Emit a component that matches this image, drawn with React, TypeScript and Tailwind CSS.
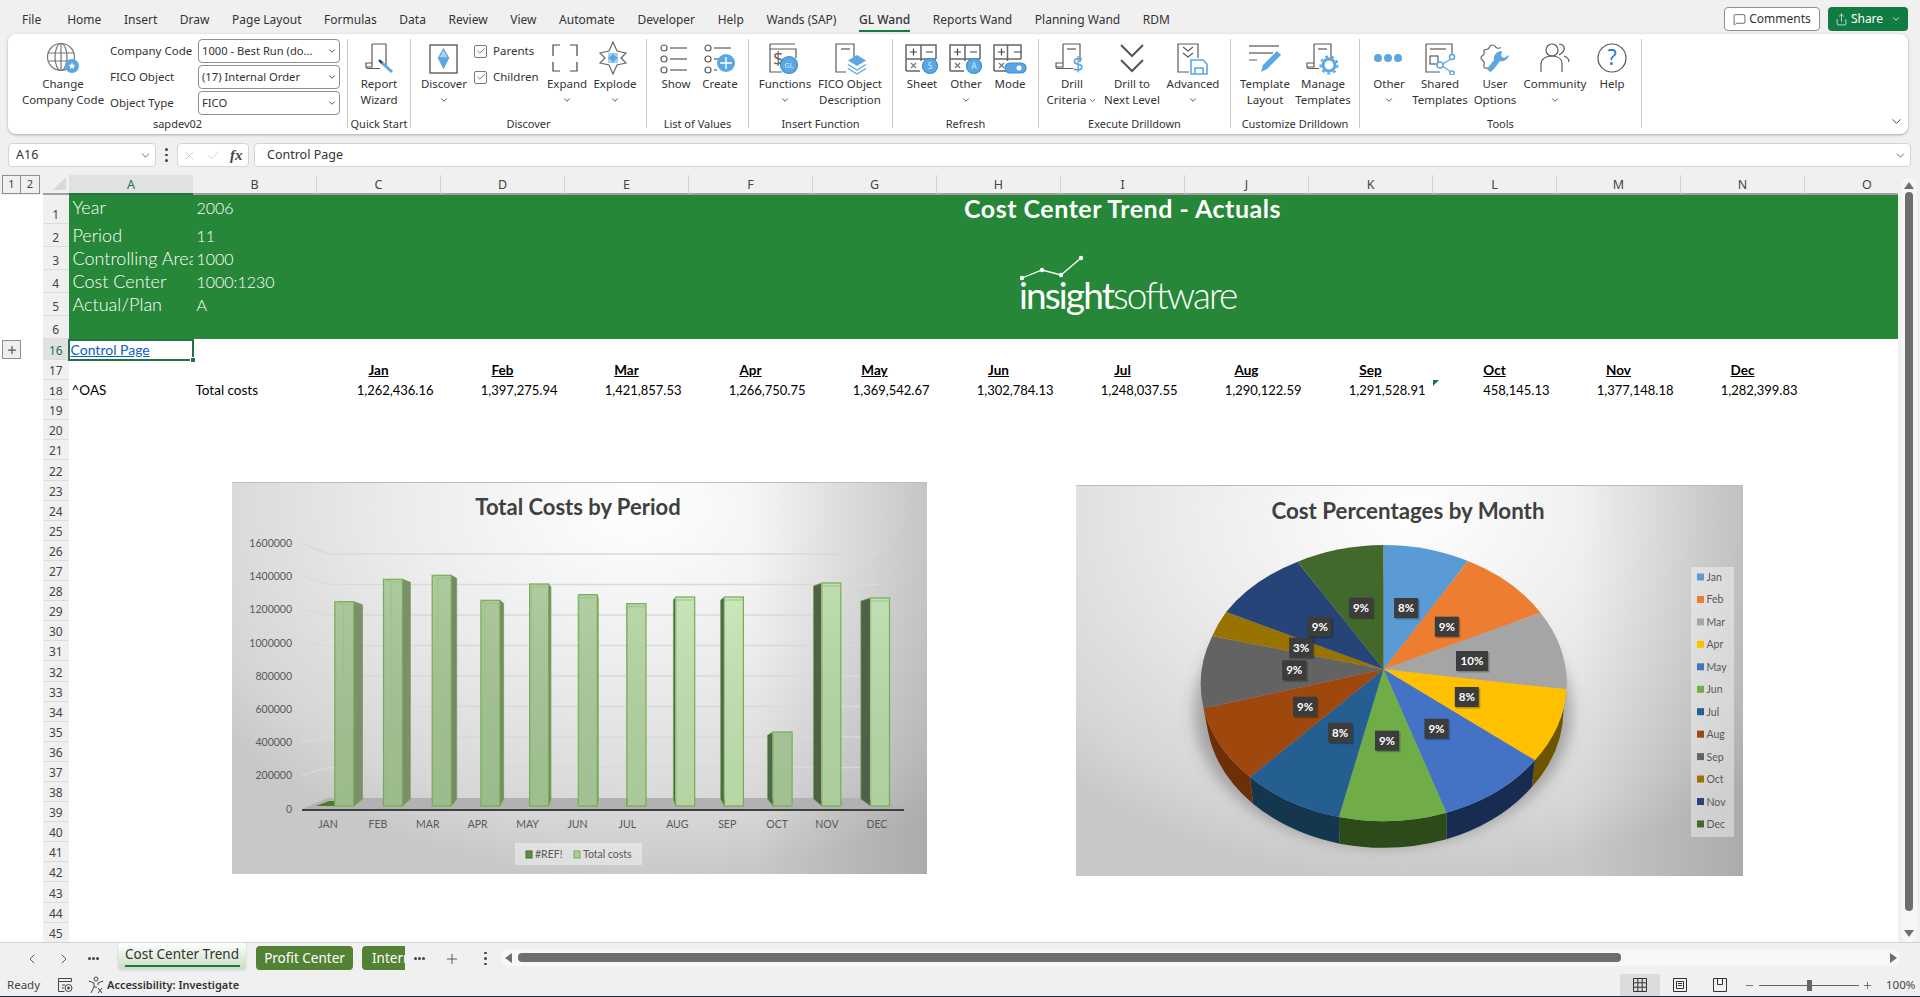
import { ChevronDown, ChevronLeft, ChevronRight, MessageSquare, X, Check, Plus, Minus, Share } from "lucide-react";
import type { ReactNode } from "react";

const BLUE = "#5ba7e4";
const INK = "#5a5a5a";

const tabs = ["Home", "Insert", "Draw", "Page Layout", "Formulas", "Data", "Review", "View", "Automate", "Developer", "Help", "Wands (SAP)", "GL Wand", "Reports Wand", "Planning Wand", "RDM"];
const cols = ["A", "B", "C", "D", "E", "F", "G", "H", "I", "J", "K", "L", "M", "N", "O"];
const months = ["Jan", "Feb", "Mar", "Apr", "May", "Jun", "Jul", "Aug", "Sep", "Oct", "Nov", "Dec"];
const values = ["1,262,436.16", "1,397,275.94", "1,421,857.53", "1,266,750.75", "1,369,542.67", "1,302,784.13", "1,248,037.55", "1,290,122.59", "1,291,528.91", "458,145.13", "1,377,148.18", "1,282,399.83"];

// ---- ribbon icons

function Ico({ children, w = 34 }: { children: ReactNode; w?: number }) {
  return (
    <svg width={w} height="34" viewBox={`0 0 ${w} 34`} fill="none" stroke={INK} strokeWidth="1.2">
      {children}
    </svg>
  );
}

const GlobeIcon = () => (
  <Ico>
    <circle cx="15" cy="16" r="13.5" stroke="#777" />
    <ellipse cx="15" cy="16" rx="6" ry="13.5" stroke="#777" />
    <path d="M2 12h26M2 20h26M15 3v26" stroke="#777" />
    <circle cx="26" cy="25" r="7" fill={BLUE} stroke="none" />
    <path d="M26 21.5l1 2.3 2.4.2-1.8 1.6.5 2.4-2.1-1.3-2.1 1.3.5-2.4-1.8-1.6 2.4-.2z" fill="#fff" stroke="none" />
  </Ico>
);
const WizardIcon = () => (
  <Ico>
    <path d="M10 3h14v21M10 3v23H4v-4h6M4 26c0 1 1 1.500 2 1.500h12" />
    <path d="M18 20l12 11" stroke={BLUE} strokeWidth="3" />
    <path d="M17 19l3 3" stroke="#333" strokeWidth="2" />
  </Ico>
);
const DiscoverIcon = () => (
  <Ico>
    <rect x="3" y="4" width="27" height="28" stroke="#444" />
    <path d="M16.500 8l5 9h-10z" fill="#a8d3f2" stroke={BLUE} />
    <path d="M16.500 27l5-10h-10z" fill={BLUE} stroke={BLUE} />
  </Ico>
);
const ExpandIcon = () => (
  <Ico>
    <path d="M10 4H3v11M20 4h7v11M3 21v9h7M27 21v9h-7" stroke="#444" />
  </Ico>
);
const ExplodeIcon = () => (
  <Ico>
    <path d="M15 1l4 9 9 2-5 5 5 5-9 2-4 9-4-9-9-2 5-5-5-5 9-2z" stroke="#666" />
    <rect x="10" y="12" width="10" height="10" fill="#a6d1f0" stroke="none" />
    <path d="M15 12l2 3 3 2-3 2-2 3-2-3-3-2 3-2z" fill={BLUE} stroke="none" />
  </Ico>
);
const ListRows = ({ short }: { short?: boolean }) => (
  <>
    <circle cx="5" cy="7" r="3" />
    <path d="M11 7h17" />
    <circle cx="5" cy="18" r="3" />
    <path d={short ? "M11 18h7" : "M11 18h17"} stroke="#999" strokeWidth="2" />
    <circle cx="5" cy="29" r="3" />
    <path d={short ? "M11 29h3" : "M11 29h17"} />
  </>
);
const ShowIcon = () => (
  <Ico>
    <ListRows />
  </Ico>
);
const CreateIcon = () => (
  <Ico>
    <ListRows short />
    <circle cx="23" cy="22" r="9" fill={BLUE} stroke="none" />
    <path d="M23 16v12M17 22h12" stroke="#fff" strokeWidth="1.400" />
  </Ico>
);
const FunctionsIcon = () => (
  <Ico w={36}>
    <path d="M3 3h25M3 8h26v9M3 3v28h12" />
    <text x="6" y="24" fontSize="18" fill="#666" stroke="none" fontFamily="Noto Sans">$</text>
    <circle cx="22" cy="24" r="8.500" fill={BLUE} stroke="#3d8fd0" />
    <text x="22" y="26.500" fontSize="7" fill="#d8ecfb" stroke="none" textAnchor="middle" fontFamily="Noto Sans">GL</text>
  </Ico>
);
const FicoIcon = () => (
  <Ico w={36}>
    <path d="M22 16V3H4v28h10" />
    <path d="M9 8h9" stroke="#999" strokeWidth="2" />
    <path d="M25 14l9 5.500-9 5.500-9-5.500z" fill={BLUE} stroke="none" />
    <path d="M16 23.500l9 5.500 9-5.500M16 27.500l9 5.500 9-5.500" stroke={BLUE} strokeWidth="1.300" />
  </Ico>
);
const GridCells = ({ w = 30 }: { w?: number }) => (
  <>
    <path d={`M2 30V4h${w}v14M2 18h${w}M${2 + w / 2} 4v14M2 30h14M${2 + w / 2} 18v2`} stroke="#666" strokeWidth="1.500" />
    <path d="M6 11h7M9.500 7.500v7M22 11h7" stroke="#444" strokeWidth="1.200" />
    <path d="M7 22l5 5M12 22l-5 5" stroke="#777" />
  </>
);
const SheetIcon = ({ letter }: { letter: string }) => (
  <Ico w={36}>
    <GridCells />
    <circle cx="26" cy="25" r="7.500" fill={BLUE} stroke="#3d8fd0" />
    <text x="26" y="28" fontSize="8" fill="#d8ecfb" stroke="none" textAnchor="middle" fontFamily="Noto Sans">{letter}</text>
  </Ico>
);
const ModeIcon = () => (
  <Ico w={36}>
    <GridCells w={27} />
    <rect x="13" y="22" width="21" height="10" rx="5" fill={BLUE} stroke="#3d8fd0" />
    <circle cx="27" cy="27" r="2.500" fill="#fff" stroke="none" />
  </Ico>
);
const DrillCriteriaIcon = () => (
  <Ico w={36}>
    <path d="M9 3h17v18M9 3v23H2v-4h7M2 26c0 1 1 1.500 2 1.500h15" />
    <path d="M13 8h9" stroke="#999" strokeWidth="2" />
    <text x="24" y="30" fontSize="20" fill={BLUE} stroke="none" textAnchor="middle" fontFamily="Noto Sans">$</text>
  </Ico>
);
const DrillNextIcon = () => (
  <Ico>
    <path d="M6 4l11 11L28 4M6 19l11 11 11-11" stroke="#555" strokeWidth="2" />
  </Ico>
);
const AdvancedIcon = () => (
  <Ico w={36}>
    <path d="M14 31H3V3h20v14" />
    <path d="M8 6l5 4 5-4M8 12l5 4 5-4" />
    <path d="M16 19h12l4 4v10H16z" stroke={BLUE} strokeWidth="1.600" fill="#fff" />
    <path d="M20 33v-6h8v6" stroke={BLUE} strokeWidth="1.600" />
  </Ico>
);
const TemplateIcon = () => (
  <Ico w={36}>
    <path d="M2 5h30M2 12h24" stroke="#777" strokeWidth="1.400" />
    <path d="M2 19h8" stroke="#777" />
    <path d="M14 31l2-7L30 10l4 4-14 14z" fill={BLUE} stroke="none" />
  </Ico>
);
const ManageIcon = () => (
  <Ico w={36}>
    <path d="M9 3h17v14M9 3v23H2v-4h7M2 26c0 1 1 1.500 2 1.500h10" />
    <path d="M13 8h9" stroke="#999" strokeWidth="2" />
    <circle cx="24" cy="24" r="6" stroke={BLUE} strokeWidth="3" />
    <circle cx="24" cy="24" r="8.500" stroke={BLUE} strokeWidth="2" strokeDasharray="3 3" />
  </Ico>
);
const DotsIcon = () => (
  <Ico>
    <circle cx="6" cy="17" r="4" fill={BLUE} stroke="none" />
    <circle cx="16" cy="17" r="4" fill={BLUE} stroke="none" />
    <circle cx="26" cy="17" r="4" fill={BLUE} stroke="none" />
  </Ico>
);
const SharedIcon = () => (
  <Ico>
    <path d="M3 3h26v14M3 3v28h14" />
    <path d="M7 8h16" stroke="#999" strokeWidth="2" />
    <rect x="7" y="15" width="8" height="8" />
    <path d="M18 24l10-6M18 24l10 7" stroke={BLUE} />
    <circle cx="17" cy="24" r="3" stroke={BLUE} strokeWidth="1.500" fill="#fff" />
    <circle cx="29" cy="16" r="2.500" stroke={BLUE} strokeWidth="1.500" fill="#fff" />
    <circle cx="29" cy="32" r="2" stroke={BLUE} strokeWidth="1.500" fill="#fff" />
  </Ico>
);
const UserOptIcon = () => (
  <Ico>
    <path d="M14 30c-2 0-2-3-4-3s-3 1-4-1 1-3 0-5-3-2-3-4 2-2 3-4-1-3 0-4 2 0 4-1 1-4 4-4 3 2 5 3 3-1 4 0" stroke="#666" />
    <path d="M12 31l4-3 6-8c3 1 8-1 9-6l-5 3-3-2 1-5c-5 0-9 4-8 9l-7 9z" fill={BLUE} stroke="none" />
  </Ico>
);
const CommunityIcon = () => (
  <Ico>
    <circle cx="14" cy="9" r="6" />
    <path d="M3 31V23c0-5 5-8 11-8s10 3 10 8v8" />
    <path d="M21 3c4 0 6 3 5 6s-3 4-5 5M26 15c3 1 5 3 5 6" />
  </Ico>
);
const HelpIcon = () => (
  <Ico>
    <circle cx="17" cy="17" r="14" stroke="#555" />
    <text x="17" y="24" fontSize="21" fill="#2b7cd3" stroke="none" textAnchor="middle" fontFamily="Noto Sans">?</text>
  </Ico>
);

// ---- ribbon pieces

function RibbonBtn({ icon, lines, chevron, className }: { icon: ReactNode; lines: string[]; chevron?: "below" | "inline"; className: string }) {
  return (
    <div className={`flex flex-col items-center shrink-0 ${className}`}>
      <div className="h-[37px] pb-[1px] flex items-end justify-center">{icon}</div>
      {lines.map((l, i) => (
        <div key={l} className="h-[16px] leading-[16px] whitespace-nowrap flex items-center">
          {l}
          {chevron === "inline" && i === lines.length - 1 && <ChevronDown size={9} className="ml-[2px]" />}
        </div>
      ))}
      {chevron === "below" && (
        <div className="h-[16px] flex items-center">
          <ChevronDown size={10} />
        </div>
      )}
    </div>
  );
}

function Group({ label, className, children }: { label: string; className: string; children: ReactNode }) {
  return (
    <div className={`flex flex-col h-[89px] border-r border-[#c8c8c8] shrink-0 ${className}`}>
      <div className="h-[80px] flex">{children}</div>
      <div className="h-[9px] leading-[9px] text-center whitespace-nowrap text-[11px]">{label}</div>
    </div>
  );
}

function Field({ label, value }: { label: string; value: string }) {
  return (
    <div className="flex items-center h-[24px] mb-[2px]">
      <div className="w-[88px]">{label}</div>
      <div className="w-[142px] h-[24px] border border-[#8f8f8f] rounded-[4px] bg-white flex items-center justify-between pl-[3px] pr-[2px]">
        <span className="whitespace-nowrap text-[11.200px]">{value}</span>
        <ChevronDown size={10} strokeWidth={2} />
      </div>
    </div>
  );
}

function Tick({ label }: { label: string }) {
  return (
    <div className="flex items-center h-[26px]">
      <div className="w-[13px] h-[13px] border border-[#7a7a7a] rounded-[2px] flex items-center justify-center mr-[6px]">
        <Check size={10} strokeWidth={1.600} color="#333" />
      </div>
      {label}
    </div>
  );
}

function Ribbon() {
  return (
    <div className="h-[100px] ml-[8px] mr-[12px] bg-white rounded-[8px] shadow-[0_1px_3px_rgba(0,0,0,0.3)] flex py-[5px] text-[11.500px] text-[#333] relative">
      <Group label="sapdev02" className="w-[340px]">
        <RibbonBtn className="w-[90px] ml-[10px]" icon={<GlobeIcon />} lines={["Change", "Company Code"]} />
        <div className="ml-[2px]">
          <Field label="Company Code" value="1000 - Best Run (do..." />
          <Field label="FICO Object" value="(17) Internal Order" />
          <Field label="Object Type" value="FICO" />
        </div>
      </Group>
      <Group label="Quick Start" className="w-[63px]">
        <RibbonBtn className="w-[62px]" icon={<WizardIcon />} lines={["Report", "Wizard"]} />
      </Group>
      <Group label="Discover" className="w-[236px]">
        <RibbonBtn className="w-[60px] ml-[3px]" icon={<DiscoverIcon />} lines={["Discover"]} chevron="below" />
        <div className="w-[69px] -mt-[1px]">
          <Tick label="Parents" />
          <Tick label="Children" />
        </div>
        <RibbonBtn className="w-[48px]" icon={<ExpandIcon />} lines={["Expand"]} chevron="below" />
        <RibbonBtn className="w-[48px]" icon={<ExplodeIcon />} lines={["Explode"]} chevron="below" />
      </Group>
      <Group label="List of Values" className="w-[102px]">
        <RibbonBtn className="w-[44px] ml-[7px]" icon={<ShowIcon />} lines={["Show"]} />
        <RibbonBtn className="w-[44px]" icon={<CreateIcon />} lines={["Create"]} />
      </Group>
      <Group label="Insert Function" className="w-[144px]">
        <RibbonBtn className="w-[60px] ml-[6px]" icon={<FunctionsIcon />} lines={["Functions"]} chevron="below" />
        <RibbonBtn className="w-[70px]" icon={<FicoIcon />} lines={["FICO Object", "Description"]} />
      </Group>
      <Group label="Refresh" className="w-[146px]">
        <RibbonBtn className="w-[44px] ml-[7px]" icon={<SheetIcon letter="S" />} lines={["Sheet"]} />
        <RibbonBtn className="w-[44px]" icon={<SheetIcon letter="A" />} lines={["Other"]} chevron="below" />
        <RibbonBtn className="w-[44px]" icon={<ModeIcon />} lines={["Mode"]} />
      </Group>
      <Group label="Execute Drilldown" className="w-[192px]">
        <RibbonBtn className="w-[60px] ml-[3px]" icon={<DrillCriteriaIcon />} lines={["Drill", "Criteria"]} chevron="inline" />
        <RibbonBtn className="w-[60px]" icon={<DrillNextIcon />} lines={["Drill to", "Next Level"]} />
        <RibbonBtn className="w-[62px]" icon={<AdvancedIcon />} lines={["Advanced"]} chevron="below" />
      </Group>
      <Group label="Customize Drilldown" className="w-[129px]">
        <RibbonBtn className="w-[58px] ml-[5px]" icon={<TemplateIcon />} lines={["Template", "Layout"]} />
        <RibbonBtn className="w-[58px]" icon={<ManageIcon />} lines={["Manage", "Templates"]} />
      </Group>
      <Group label="Tools" className="w-[282px]">
        <RibbonBtn className="w-[50px] ml-[4px]" icon={<DotsIcon />} lines={["Other"]} chevron="below" />
        <RibbonBtn className="w-[52px]" icon={<SharedIcon />} lines={["Shared", "Templates"]} />
        <RibbonBtn className="w-[58px]" icon={<UserOptIcon />} lines={["User", "Options"]} />
        <RibbonBtn className="w-[62px]" icon={<CommunityIcon />} lines={["Community"]} chevron="below" />
        <RibbonBtn className="w-[52px]" icon={<HelpIcon />} lines={["Help"]} />
      </Group>
      <div className="flex-1 flex justify-end items-end pr-[4px]">
        <ChevronDown size={15} strokeWidth={1.400} />
      </div>
    </div>
  );
}

// ---- bar chart

const bars = [
  { m: "JAN", top: 118.7, dx: 8.7, fill: "#aecb9e", side: "#7a8f6c" },
  { m: "FEB", top: 96.3, dx: 7.8, fill: "#aecb9e", side: "#7a8f6c" },
  { m: "MAR", top: 92.3, dx: 5.5, fill: "#aecb9e", side: "#74896a" },
  { m: "APR", top: 117.3, dx: 3.7, fill: "#aecb9e", side: "#74896a" },
  { m: "MAY", top: 101, dx: 2.3, fill: "#b0cea1", side: "#74896a" },
  { m: "JUN", top: 111.7, dx: 0.9, fill: "#b4d2a5", side: "#6d8463" },
  { m: "JUL", top: 120.7, dx: -0.5, fill: "#bedbaf", side: "#5c7452" },
  { m: "AUG", top: 114, dx: -2.3, fill: "#cbe8ba", side: "#4f6648" },
  { m: "SEP", top: 114, dx: -3.7, fill: "#cdebbc", side: "#4f6648" },
  { m: "OCT", top: 249, dx: -5.5, fill: "#b4d2a5", side: "#4f6648" },
  { m: "NOV", top: 100, dx: -8.3, fill: "#c0e0b0", side: "#4f6149" },
  { m: "DEC", top: 115, dx: -9.6, fill: "#c4e3b5", side: "#4f6149" },
];
const axis = ["1600000", "1400000", "1200000", "1000000", "800000", "600000", "400000", "200000", "0"];

function BarChart() {
  const bottom = 323;
  return (
    <div className="absolute left-[232px] top-[307px] w-[695px] h-[392px] border-t border-[#bdbdbd] bg-[linear-gradient(to_right,transparent_75%,rgba(0,0,0,0.14)_100%),radial-gradient(ellipse_75%_95%_at_58%_6%,#ffffff_0%,#ececec_45%,#d6d6d6_85%,#c8c8c8_100%)]">
      <svg width="695" height="392" fontFamily="Lato, sans-serif">
        <defs>
          <linearGradient id="barShade" gradientUnits="userSpaceOnUse" x1="0" y1="90" x2="0" y2="323">
            <stop offset="0" stopColor="#000" stopOpacity="0" />
            <stop offset="1" stopColor="#3f6b2c" stopOpacity="0.16" />
          </linearGradient>
        </defs>
        <text x="346" y="32" textAnchor="middle" fontSize="22" fontWeight="700" fill="#404040">Total Costs by Period</text>
        {axis.map((a, i) => {
          const fy = 60 + i * 33.2;
          const by = 71 + i * 30.5;
          return (
            <g key={a}>
              {i < 8 && <path d={`M70 ${fy}L96 ${by}H647`} stroke="#d9d9d9" strokeWidth="1.400" fill="none" />}
              <text x="60" y={fy + 4} textAnchor="end" fontSize="10.500" fill="#595959">{a}</text>
            </g>
          );
        })}
        <path d="M70 326L96 315H647L672 326z" fill="#b2b2b2" />
        <path d="M84 323L97 318H103V323z" fill="#4d7a2c" />
        {bars.map((b, i) => {
          const x = 102.8 + i * 48.7;
          const r = x + 19;
          return (
            <g key={b.m}>
              {b.dx > 0 ? (
                <path d={`M${r} ${b.top}L${r + b.dx} ${b.top + 3}V${bottom - 7}L${r} ${bottom}z`} fill={b.side} stroke="#6fa251" strokeWidth="0.800" />
              ) : (
                <path d={`M${x} ${b.top}L${x + b.dx} ${b.top + 3}V${bottom - 7}L${x} ${bottom}z`} fill={b.side} stroke="#6fa251" strokeWidth="0.800" />
              )}
              <rect x={x} y={b.top} width="19" height={bottom - b.top} fill={b.fill} />
              <rect x={x} y={b.top} width="19" height={bottom - b.top} fill="url(#barShade)" stroke="#73ad55" strokeWidth="1.200" />
              <path d={`M${x + Math.max(b.dx, 0)} ${b.top + 3}V${bottom - 7}M${x} ${b.top}L${x + Math.max(b.dx, 0)} ${b.top + 3}H${r}`} stroke="#9cc188" strokeWidth="1" fill="none" />
            </g>
          );
        })}
        <path d="M70 327H672" stroke="#404040" strokeWidth="2" />
        {bars.map((b, i) => (
          <text key={b.m} x={96 + i * 49.9} y="345" textAnchor="middle" fontSize="10.500" fill="#595959">{b.m}</text>
        ))}
        <rect x="283" y="360" width="127" height="22" fill="#fff" fillOpacity="0.4" />
        <rect x="294" y="368" width="6" height="7" fill="#5f8f3f" stroke="#3e6a27" />
        <text x="303" y="375" fontSize="10.500" fill="#595959">#REF!</text>
        <rect x="342" y="368" width="6" height="7" fill="#aecb9e" stroke="#73ad55" />
        <text x="351" y="375" fontSize="10.500" fill="#595959">Total costs</text>
      </svg>
    </div>
  );
}

// ---- pie chart

const zp = (x: number, y: number) => [x / 2.306 - 6, y / 3 - 5] as const;
const rim = [[723, 192], [918, 240], [1085, 395], [1145, 625], [1072, 838], [868, 995], [620, 1008], [415, 888], [308, 682], [328, 465], [360, 393], [525, 242]].map(([x, y]) => zp(x, y));
const under = [[1138, 690], [1065, 918], [868, 1075], [622, 1088], [422, 968], [318, 750]].map(([x, y]) => zp(x, y));
const apex = zp(723, 565);
const sliceColors = ["#5b9bd5", "#ed7d31", "#a5a5a5", "#ffc000", "#4472c4", "#70ad47", "#255e91", "#9e480e", "#636363", "#997300", "#264478", "#43682b"];
const sideColors = ["#6f5400", "#182c52", "#2c4a1a", "#14364f", "#6c2f08"];
const labels = [
  ["8%", 775, 381], ["9%", 869, 437], ["10%", 927, 540], ["8%", 915, 648], ["9%", 845, 743], ["9%", 731, 779],
  ["8%", 623, 755], ["9%", 542, 677], ["9%", 517, 568], ["3%", 533, 500], ["9%", 576, 437], ["9%", 671, 380],
] as const;

function PieChart() {
  const rx = 183;
  const ry = 138;
  return (
    <div className="absolute left-[1076px] top-[310px] w-[667px] h-[391px] border-t border-[#bdbdbd] bg-[linear-gradient(to_right,transparent_75%,rgba(0,0,0,0.14)_100%),radial-gradient(ellipse_75%_95%_at_50%_6%,#ffffff_0%,#ececec_45%,#d6d6d6_85%,#c8c8c8_100%)]">
      <svg width="667" height="391" fontFamily="Lato, sans-serif">
        <defs>
          <filter id="pieShadow" x="-20%" y="-20%" width="140%" height="140%">
            <feGaussianBlur stdDeviation="7" />
          </filter>
        </defs>
        <text x="332" y="33" textAnchor="middle" fontSize="22.300" fontWeight="700" fill="#404040">Cost Percentages by Month</text>
        <ellipse cx="307" cy="226" rx="189" ry="135" fill="#555" fillOpacity="0.42" filter="url(#pieShadow)" />
        {sideColors.map((c, i) => {
          const a = rim[i + 3];
          const b = rim[i + 4];
          const ua = under[i];
          const ub = under[i + 1];
          return <path key={c} d={`M${a[0]} ${a[1]}A${rx} ${ry} 0 0 1 ${b[0]} ${b[1]}L${ub[0]} ${ub[1]}A${rx} ${ry} 0 0 0 ${ua[0]} ${ua[1]}Z`} fill={c} />;
        })}
        {rim.map((a, i) => {
          const b = rim[(i + 1) % rim.length];
          return <path key={sliceColors[i]} d={`M${apex[0]} ${apex[1]}L${a[0]} ${a[1]}A${rx} ${ry} 0 0 1 ${b[0]} ${b[1]}Z`} fill={sliceColors[i]} />;
        })}
        {labels.map(([t, x, y], i) => {
          const [cx, cy] = zp(x, y);
          const w = t === "10%" ? 32 : 24;
          return (
            <g key={i}>
              <rect x={cx - w / 2 + 1.5} y={cy - 10 + 1.5} width={w} height="20" fill="#000" fillOpacity="0.25" />
              <rect x={cx - w / 2} y={cy - 10} width={w} height="20" fill="#3c3c3c" />
              <text x={cx} y={cy + 4} textAnchor="middle" fontSize="11.500" fontWeight="700" fill="#fff">{t}</text>
            </g>
          );
        })}
        <rect x="615" y="81" width="43" height="270" fill="#fff" fillOpacity="0.4" />
        {months.map((m, i) => (
          <g key={m}>
            <rect x="621" y={87.500 + i * 22.45} width="7" height="7" fill={sliceColors[i]} />
            <text x="630.500" y={95 + i * 22.45} fontSize="10.500" fill="#595959">{m}</text>
          </g>
        ))}
      </svg>
    </div>
  );
}

// ---- sheet

const LOGO_PTS = "1022,278 1042,270 1061,275 1081,258";

function Sheet() {
  const rowHead = (n: number, cls: string, selected?: boolean) => (
    <div className={`flex items-end shrink-0 ${cls}`}>
      <div className="w-[43px] h-full bg-white shrink-0 flex items-center pl-[2px]">
        {selected && (
          <div className="w-[19px] h-[19px] border border-[#8e8e8e] bg-[#efefef] flex items-center justify-center">
            <Plus size={12} strokeWidth={2.500} color="#555" />
          </div>
        )}
      </div>
      <div className={`w-[25.5px] h-full shrink-0 border-b border-[#dcdcdc] flex items-end justify-center leading-[16px] text-[12px] ${selected ? "bg-[#e1e1e1] text-[#217346]" : "bg-[#f0f0f0] text-[#444]"}`}>
        {n}
      </div>
    </div>
  );

  const plainRows = Array.from({ length: 27 }, (_, i) => i + 19);

  return (
    <div className="w-[1898px] h-[767px] relative overflow-hidden bg-white shrink-0">
      {/* column headings */}
      <div className="flex h-[20px] text-[12.500px] text-[#444] bg-[#f0f0f0]">
        <div className="w-[43px] flex pl-[2px] shrink-0">
          <div className="w-[19px] h-[19px] border border-[#8e8e8e] flex items-center justify-center text-[11px]">1</div>
          <div className="w-[19px] h-[19px] border border-l-0 border-[#8e8e8e] flex items-center justify-center text-[11px]">2</div>
        </div>
        <div className="w-[25.5px] shrink-0 relative border-b-2 border-[#a0a0a0]">
          <div className="absolute right-[3px] bottom-[3px] w-0 h-0 border-l-[13px] border-l-transparent border-b-[13px] border-b-[#d9d9d9]" />
        </div>
        {cols.map((c) => (
          <div key={c} className={`w-[124px] shrink-0 flex items-center justify-center pt-[2px] pl-[1px] border-b-2 ${c === "A" ? "bg-[#e1e1e1] text-[#217346] border-[#217346]" : "border-r border-r-[#d4d4d4] border-b-[#a0a0a0]"} ${c === "O" ? "border-r-0" : ""}`}>
            {c}
          </div>
        ))}
      </div>

      {/* green banner rows */}
      {[
        { n: 1, h: "h-[29px]", a: "Year", b: "2006", t: "pt-[1px]" },
        { n: 2, h: "h-[23px]", a: "Period", b: "11", t: "" },
        { n: 3, h: "h-[23px]", a: "Controlling Area", b: "1000", t: "" },
        { n: 4, h: "h-[23px]", a: "Cost Center", b: "1000:1230", t: "" },
        { n: 5, h: "h-[23px]", a: "Actual/Plan", b: "A", t: "" },
        { n: 6, h: "h-[23px]", a: "", b: "", t: "" },
      ].map((r) => (
        <div key={r.n} className={`flex ${r.h}`}>
          {rowHead(r.n, "h-full")}
          <div className="flex-1 bg-[#278738] flex text-white text-[18px] font-light leading-[23px] font-['Lato',sans-serif]">
            <div className={`w-[124px] pl-[4px] overflow-hidden whitespace-nowrap ${r.t}`}>{r.a}</div>
            <div className={`w-[200px] pl-[4px] whitespace-nowrap text-[16px] ${r.t}`}>{r.b}</div>
            {r.n === 1 && <div className="ml-[413px] w-[634px] text-center text-[25px] tracking-[0.5px] font-bold leading-[27px] whitespace-nowrap">Cost Center Trend - Actuals</div>}
          </div>
        </div>
      ))}

      {/* row 16 */}
      <div className="flex h-[21px] relative">
        {rowHead(16, "h-full", true)}
        <div className="w-[126px] -ml-[1px] h-[22px] border-2 border-[#217346] text-[14px] leading-[18px] pl-[1px] text-[#0563c1] underline font-['Lato',sans-serif] relative z-10">
          Control Page
          <div className="absolute -right-[4px] -bottom-[4px] w-[6px] h-[6px] bg-[#217346] border border-white" />
        </div>
      </div>

      {/* row 17 */}
      <div className="flex h-[20.100px]">
        {rowHead(17, "h-full")}
        <div className="w-[248px] shrink-0" />
        {months.map((m) => (
          <div key={m} className="w-[124px] shrink-0 text-center text-[13.500px] font-bold underline leading-[20px] text-black font-['Lato',sans-serif]">{m}</div>
        ))}
      </div>

      {/* row 18 */}
      <div className="flex h-[20.100px] text-[13.500px] leading-[20px] text-black font-['Lato',sans-serif]">
        {rowHead(18, "h-full")}
        <div className="w-[124px] shrink-0 pl-[3px]">^OAS</div>
        <div className="w-[124px] shrink-0 pl-[3px]">Total costs</div>
        {values.map((v, i) => (
          <div key={v} className={`w-[124px] shrink-0 text-right text-[13px] pr-[7px] relative`}>
            {v}
            {i === 9 && <div className="absolute left-0 top-0 w-0 h-0 border-t-[6px] border-t-[#107c41] border-r-[6px] border-r-transparent" />}
          </div>
        ))}
      </div>

      {plainRows.map((n) => (
        <div key={n} className="flex h-[20.100px]">
          {rowHead(n, "h-full")}
        </div>
      ))}

      {/* insightsoftware logo picture */}
      <div className="absolute left-0 top-0 pointer-events-none">
        <svg width="1100" height="110" className="absolute left-[0px] top-[80px]" viewBox="0 255 1100 110">
          <polyline points={LOGO_PTS} stroke="#fff" strokeWidth="1.300" fill="none" />
          {LOGO_PTS.split(" ").map((p) => {
            const [x, y] = p.split(",");
            return <circle key={p} cx={x} cy={y} r="2.200" fill="#fff" />;
          })}
        </svg>
        <div className="absolute left-[1019px] top-[95px] text-white whitespace-nowrap text-[37px] leading-[50px] tracking-[-1.900px] font-['Lato',sans-serif]">
          <span className="font-normal">insight</span>
          <span className="font-light">software</span>
        </div>
      </div>

      <BarChart />
      <PieChart />
    </div>
  );
}

function ScrollV() {
  return (
    <div className="w-[22px] h-[767px] flex justify-center pt-[3px] shrink-0 bg-[#f0f0f0]">
      <div className="w-[16px] h-full bg-[#f6f6f6] rounded-[8px] flex flex-col items-center pt-[4px] pb-[5px]">
        <div className="w-0 h-0 border-l-[5px] border-l-transparent border-r-[5px] border-r-transparent border-b-[7px] border-b-[#6e6e6e]" />
        <div className="w-[8px] h-[719px] bg-[#6e6e6e] rounded-[4px] mt-[3px]" />
        <div className="flex-1" />
        <div className="w-0 h-0 border-l-[5px] border-l-transparent border-r-[5px] border-r-transparent border-t-[7px] border-t-[#6e6e6e]" />
      </div>
    </div>
  );
}

function Dots3() {
  return (
    <div className="flex gap-[1px]">
      <div className="w-[3px] h-[3px] rounded-full bg-[#444]" />
      <div className="w-[3px] h-[3px] rounded-full bg-[#444]" />
      <div className="w-[3px] h-[3px] rounded-full bg-[#444]" />
    </div>
  );
}

function VDots() {
  return (
    <div className="flex flex-col gap-[3px]">
      <div className="w-[2.500px] h-[2.500px] rounded-full bg-[#444]" />
      <div className="w-[2.500px] h-[2.500px] rounded-full bg-[#444]" />
      <div className="w-[2.500px] h-[2.500px] rounded-full bg-[#444]" />
    </div>
  );
}

function SheetTabs() {
  return (
    <div className="h-[32px] flex items-start bg-[#f0f0f0] border-t border-[#d4d4d4] text-[13.500px]">
      <div className="w-[117px] h-full flex items-center shrink-0 text-[#444]">
        <ChevronLeft size={16} strokeWidth={1.300} className="ml-[24px]" />
        <ChevronRight size={16} strokeWidth={1.300} className="ml-[16px]" />
        <div className="ml-[16px]"><Dots3 /></div>
      </div>
      <div className="w-[130px] h-[27px] shrink-0 rounded-b-[5px] bg-gradient-to-b from-white to-[#c9ddc1] border border-t-0 border-[#e2e2e2] shadow-[0_1px_1px_rgba(0,0,0,0.1)] flex flex-col items-center pt-[2px] leading-[19px] text-[#333]">
        Cost Center Trend
        <div className="w-[115px] h-[2px] bg-[#107c41] mt-[1px]" />
      </div>
      <div className="w-[9px] shrink-0" />
      <div className="w-[97px] h-[24px] mt-[3px] shrink-0 rounded-[4px] bg-[#548235] text-white flex items-center justify-center">Profit Center</div>
      <div className="w-[9px] shrink-0" />
      <div className="w-[43px] h-[24px] mt-[3px] shrink-0 rounded-l-[4px] bg-[#548235] text-white pl-[10px] leading-[24px] overflow-hidden whitespace-nowrap">Internal</div>
      <div className="w-[96px] h-full flex items-center shrink-0 text-[#444]">
        <div className="ml-[9px]"><Dots3 /></div>
        <Plus size={16} strokeWidth={1.300} className="ml-[19px]" />
        <div className="ml-[24px]"><VDots /></div>
      </div>
      <div className="w-[1399px] h-[17px] mt-[6px] bg-[#f7f7f7] rounded-[8px] flex items-center pl-[4px] pr-[3px] shrink-0">
        <div className="w-0 h-0 border-t-[5px] border-t-transparent border-b-[5px] border-b-transparent border-r-[7px] border-r-[#6e6e6e]" />
        <div className="w-[1103px] h-[9px] ml-[6px] bg-[#6e6e6e] rounded-[4px]" />
        <div className="flex-1" />
        <div className="w-0 h-0 border-t-[5px] border-t-transparent border-b-[5px] border-b-transparent border-l-[7px] border-l-[#6e6e6e]" />
      </div>
    </div>
  );
}

function StatusBar() {
  return (
    <div className="h-[23px] flex items-center bg-[#f0f0f0] border-b border-[#1c2b3a] text-[11.500px] text-[#444]">
      <div className="pl-[7px] w-[57px] shrink-0">Ready</div>
      <svg width="16" height="16" viewBox="0 0 16 16" fill="none" stroke="#444" className="shrink-0">
        <path d="M1.500 1.500h13v3h-13zM1.500 4.500v10h6M5 8h3M5 11h2" />
        <circle cx="11.500" cy="11" r="3.500" />
        <circle cx="11.500" cy="11" r="1" fill="#444" />
      </svg>
      <svg width="16" height="18" viewBox="0 0 16 18" fill="none" stroke="#444" className="ml-[15px] shrink-0">
        <circle cx="8" cy="3" r="2" />
        <path d="M1 5l5 2v4l-3 6M15 5l-5 2v2M6 11h3M10 12l4 5M14 12l-4 5" />
      </svg>
      <div className="ml-[3px] font-semibold whitespace-nowrap text-[#333] text-[11px]">Accessibility: Investigate</div>
      <div className="flex-1" />
      <div className="w-[40px] h-full bg-[#dcdcdc] flex items-center justify-center shrink-0">
        <svg width="14" height="14" viewBox="0 0 14 14" fill="none" stroke="#333"><path d="M.5.500h13v13H.5zM.5 4.800h13M.5 9.200h13M4.800.500v13M9.200.500v13" /></svg>
      </div>
      <div className="w-[40px] flex justify-center shrink-0">
        <svg width="14" height="14" viewBox="0 0 14 14" fill="none" stroke="#333"><path d="M.5.500h13v13H.5zM3.500 3.500h7v7h-7zM5 5.500h4M5 7.500h4" /></svg>
      </div>
      <div className="w-[40px] flex justify-center shrink-0">
        <svg width="14" height="14" viewBox="0 0 14 14" fill="none" stroke="#333"><path d="M.5.500h13v13H.5zM4.500.500v6h5v-6" /></svg>
      </div>
      <Minus size={11} strokeWidth={1.500} className="ml-[4px] shrink-0" />
      <div className="w-[100px] ml-[4px] h-[1px] bg-[#666] relative shrink-0">
        <div className="absolute left-[48px] -top-[5px] w-[5px] h-[11px] bg-[#666]" />
      </div>
      <Plus size={11} strokeWidth={1.500} className="ml-[3px] shrink-0" />
      <div className="w-[26px] ml-[13px] mr-[8px] shrink-0">100%</div>
    </div>
  );
}

export default function App() {
  return (
    <div className="w-[1920px] h-[997px] overflow-hidden flex flex-col bg-[#f0f0f0] font-['Noto_Sans',sans-serif] text-[#333]">
      {/* top tabs */}
      <div className="h-[34px] flex text-[12px] relative shrink-0">
        <div className="ml-[22px] mr-[26px] pt-[12px] leading-[16px]">File</div>
        <div className="flex gap-[22.600px]">
          {tabs.map((t) => (
            <div key={t} className={`pt-[12px] leading-[16px] h-[32px] whitespace-nowrap ${t === "GL Wand" ? "border-b-2 border-[#107c41] font-medium" : ""}`}>
              {t}
            </div>
          ))}
        </div>
        <div className="flex-1" />
        <div className="w-[96px] h-[24px] mt-[7px] border border-[#8f8f8f] rounded-[4px] bg-white flex items-center justify-center gap-[3px]">
          <MessageSquare size={13} strokeWidth={1.300} />
          Comments
        </div>
        <div className="w-[80px] h-[24px] mt-[7px] ml-[8px] mr-[12px] rounded-[4px] bg-[#107c41] text-white flex items-center justify-center gap-[3px]">
          <Share size={13} strokeWidth={1.300} />
          Share
          <ChevronDown size={10} className="ml-[5px]" />
        </div>
      </div>

      <Ribbon />

      {/* formula bar */}
      <div className="h-[24px] mt-[9px] mb-[8px] flex items-stretch text-[12.500px] shrink-0">
        <div className="w-[148px] ml-[8px] bg-white border border-[#d4d4d4] rounded-[4px] flex items-center justify-between pl-[7px] pr-[3px]">
          A16
          <ChevronDown size={13} strokeWidth={1.300} />
        </div>
        <div className="w-[21px] flex items-center justify-center"><VDots /></div>
        <div className="w-[72px] bg-white border border-[#d4d4d4] rounded-[4px] flex items-center pl-[4px]">
          <X size={15} strokeWidth={1} color="#b5b5b5" />
          <Check size={15} strokeWidth={1} color="#b5b5b5" className="ml-[9px]" />
          <span className="ml-[9px] text-[15px] font-['Liberation_Serif',serif] italic font-bold text-[#444]">fx</span>
        </div>
        <div className="w-[1657px] ml-[5px] bg-white border border-[#d4d4d4] rounded-[4px] flex items-center justify-between pl-[12px] pr-[3px]">
          Control Page
          <ChevronDown size={13} strokeWidth={1.300} />
        </div>
      </div>

      <div className="flex">
        <Sheet />
        <ScrollV />
      </div>
      <SheetTabs />
      <StatusBar />
    </div>
  );
}
